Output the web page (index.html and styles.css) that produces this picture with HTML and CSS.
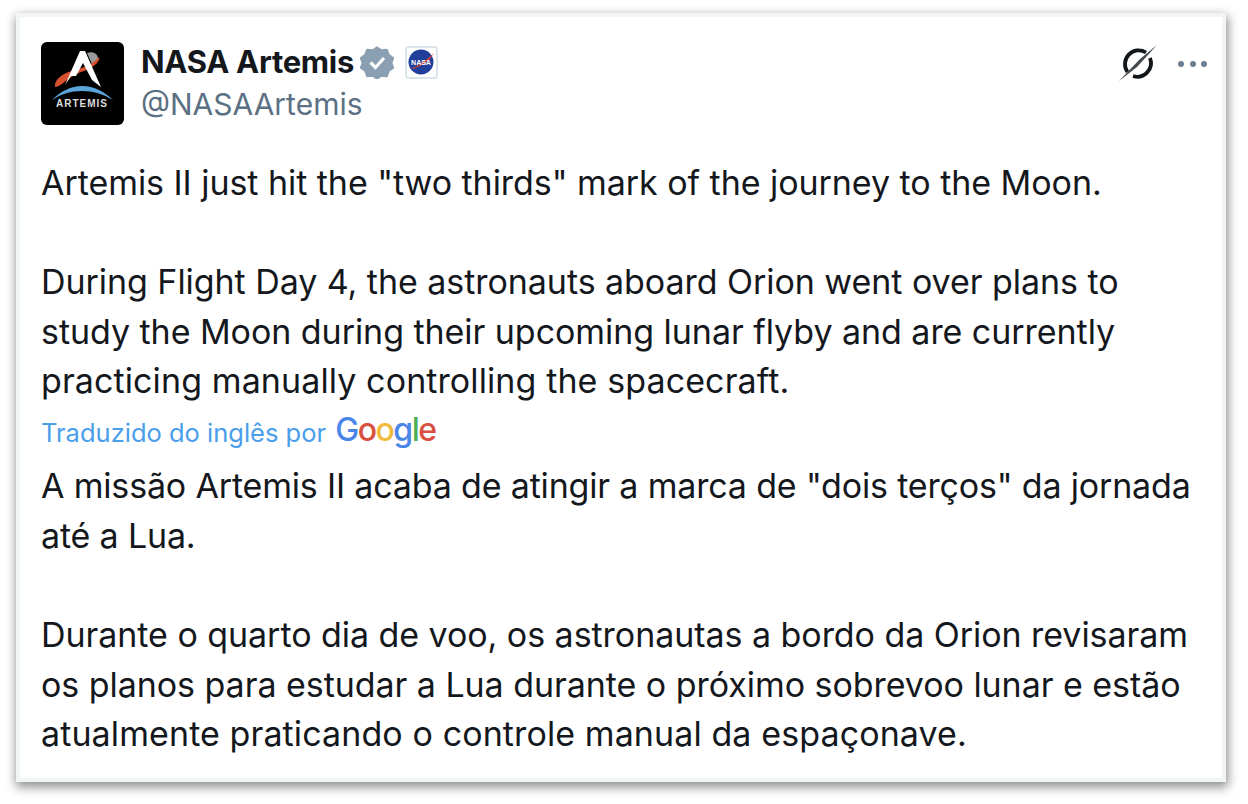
FILE: index.html
```html
<!DOCTYPE html>
<html lang="pt">
<head>
<meta charset="utf-8">
<title>NASA Artemis</title>
<link rel="stylesheet" href="styles.css">
</head>
<body>
<main class="card">
  <header class="head">
    <svg class="avatar" viewBox="0 0 83 83" aria-label="Artemis">
      <rect width="83" height="83" rx="6" fill="#000"/>
      <path d="M46 11C52 9 57 12 57 17C57 20 54 21 51 22z" fill="#9a9a9a"/>
      <path d="M14 45C13 37 22 31 34 28C44 25 52 22 58 15C60 20 50 27 40 30C32 33 26 38 21 42C18 44 16 45 14 45z" fill="#d8502f"/>
      <path d="M39 9L44 9L60 45L51 38L42 21L35 34L30 34L24 43z" fill="#fff"/>
      <path d="M11 58C20 49 30 44 41 44C53 44 64 50 72 58C62 52 52 49 41 49C30 49 20 52 11 58z" fill="#5ba4dc"/>
      <text x="41" y="65" class="avatar-text">ARTEMIS</text>
    </svg>
    <div class="identity">
      <div class="name-row">
        <span class="name">NASA Artemis</span>
        <svg class="verified" viewBox="0 0 34 34">
          <path d="M17 2l4.500 3 5.500-.5 2 5 4.500 3.500-1.800 5 1.800 5-4.500 3-2 5.500-5.500-.5-4.500 3-4.500-3-5.500.5-2-5.500-4.500-3 1.800-5-1.800-5 4.500-3.500 2-5 5.500.5z" fill="#8b9fb2" stroke="#8b9fb2" stroke-width="1.500" stroke-linejoin="round"/>
          <path d="M10.500 17.500l5 5 8.500-9.500" fill="none" stroke="#fff" stroke-width="3.200"/>
        </svg>
        <span class="badge">
          <svg viewBox="0 0 26 26" class="badge-logo">
            <circle cx="13" cy="13" r="12.500" fill="#203f9a"/>
            <path d="M2 20C10 17 19 11 26 4l-5 7C15 16 9 19 2 20z" fill="#d8402f"/>
            <text x="13" y="16" class="badge-text">NASA</text>
          </svg>
        </span>
      </div>
      <div class="handle">@NASAArtemis</div>
    </div>
    <div class="actions">
      <svg class="grok" viewBox="0 0 40 40">
        <path d="M9.500 28A13.700 13.700 0 0 1 28 8.500M32 14A13.700 13.700 0 0 1 15 32" fill="none" stroke="#14171a" stroke-width="3.800"/>
        <path d="M39 1L22 15L1 37L19 23z" fill="#454a50"/>
      </svg>
      <span class="more"><i></i><i></i><i></i></span>
    </div>
  </header>
  <p class="body">Artemis II just hit the "two thirds" mark of the journey to the Moon.</p>
  <p class="body gap">During Flight Day 4, the astronauts aboard Orion went over plans to<br>study the Moon during their upcoming lunar flyby and are currently<br><span class="wide">practicing manually controlling the spacecraft.</span></p>
  <div class="translated">Traduzido do inglês por <span class="google"><b class="g-blue">G</b><b class="g-red">o</b><b class="g-yellow">o</b><b class="g-blue">g</b><b class="g-green">l</b><b class="g-red">e</b></span></div>
  <p class="body"><span class="tight">A missão Artemis II acaba de atingir a marca de "dois terços" da jornada<br>até a Lua.</span></p>
  <p class="body gap">Durante o quarto dia de voo, os astronautas a bordo da Orion revisaram<br>os planos para estudar a Lua durante o próximo sobrevoo lunar e estão<br><span class="wide">atualmente praticando o controle manual da espaçonave.</span></p>
</main>
</body>
</html>
```
FILE: styles.css
```css
* { box-sizing: border-box; }
html, body { margin: 0; background: #fff; }
body { padding: 13px 22px 0 16px; height: 804px; overflow: hidden; font-family: Inter, "Liberation Sans", sans-serif; }
.card {
  height: 769px;
  background: #fff;
  border: 4px solid #f1f5f4;
  padding: 25px 21px 0;
  box-shadow: 1px 4px 10px 1px rgba(0,0,0,.45);
  color: #14181d;
}
.head { display: flex; align-items: flex-start; height: 83px; margin-bottom: 33px; }
.avatar { width: 83px; height: 83px; flex: none; }
.avatar-text { font: 700 10px "Liberation Sans", sans-serif; fill: #ddd; text-anchor: middle; letter-spacing: 1px; }
.identity { margin-left: 17px; }
.name-row { display: flex; align-items: center; height: 40px; }
.name { font-size: 31px; font-weight: 700; letter-spacing: -.3px; margin-top: -2px; }
.verified { width: 34px; height: 34px; margin-left: 6px; }
.badge { width: 33px; height: 33px; margin-left: 11px; border: 2px solid #dbe4e9; border-radius: 4px; display: flex; align-items: center; justify-content: center; }
.badge-logo { width: 26px; height: 26px; }
.badge-text { font: 700 7px "Liberation Sans", sans-serif; fill: #fff; text-anchor: middle; }
.handle { font-size: 30px; line-height: 40px; color: #5b7083; margin-top: 2px; }
.actions { margin-left: auto; display: flex; align-items: center; gap: 20px; margin-top: 2px; margin-right: -6px; }
.grok { width: 40px; height: 40px; }
.more { display: flex; gap: 5.500px; }
.more i { width: 6px; height: 6px; border-radius: 50%; background: #6b7f90; }
.body { margin: 0; font-size: 34px; line-height: 49.600px; letter-spacing: -.05px; }
.gap { margin-top: 49.600px; }
.wide { letter-spacing: .1px; }
.tight { letter-spacing: -.17px; }
.translated { display: flex; align-items: center; height: 55.500px; padding-bottom: 3px; font-size: 25.500px; color: #4a9eea; white-space: pre; }
.google { font-family: Inter, sans-serif; font-size: 32px; letter-spacing: -1.500px; margin-left: 2px; margin-top: -5px; }
.google b { font-weight: 500; }
.g-blue { color: #4a86e8; }
.g-red { color: #d9503f; }
.g-yellow { color: #f0bb3a; }
.g-green { color: #4caf5a; }
```
